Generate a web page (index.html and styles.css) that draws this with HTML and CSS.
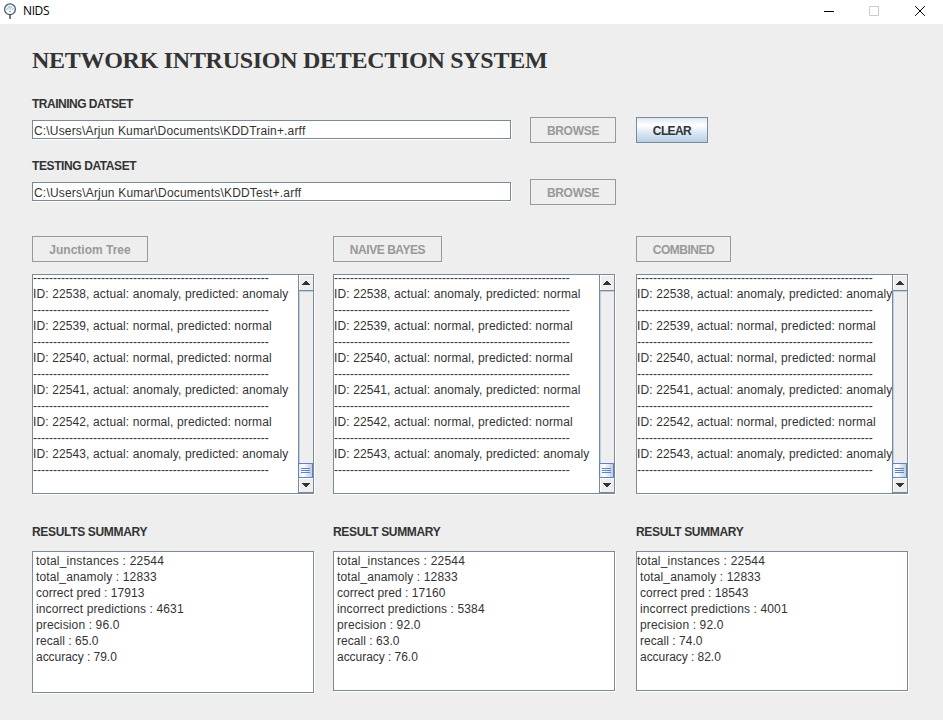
FILE: index.html
```
<!DOCTYPE html>
<html lang="en">
<head>
<meta charset="utf-8">
<title>NIDS</title>
<link rel="stylesheet" href="styles.css">
</head>
<body>
<header class="titlebar">
  <svg class="app-icon" width="14" height="18" viewBox="0 0 14 18"><circle cx="7" cy="6.300" r="5.400" fill="#f6fafc" stroke="#4b5461" stroke-width="1.200"/><path d="M3.500 6h2M6.500 6h1.500M9 6h1.500M5 4h4M6 8.500h2" stroke="#7fb0c4" stroke-width="1.200"/><path d="M7 12v4" stroke="#49525f" stroke-width="1.500"/></svg>
  <span class="app-name">NIDS</span>
  <svg class="controls" width="104" height="12" viewBox="0 0 104 12"><path d="M0 5.500h10" stroke="#000"/><path d="M45.500 .500h9v9h-9z" fill="none" stroke="#ccc"/><path d="M91.200 .200l9.600 9.600M100.800 .200L91.200 9.800" stroke="#000"/></svg>
</header>
<main class="content">
  <h1 class="title">NETWORK INTRUSION DETECTION SYSTEM</h1>
  <section class="file">
    <label class="label l-train">TRAINING DATSET</label>
    <div class="file-row">
      <div class="field"><span class="path-train">C:\Users\Arjun Kumar\Documents\KDDTrain+.arff</span></div>
      <button class="btn browse" disabled>BROWSE</button>
      <button class="btn clear">CLEAR</button>
    </div>
  </section>
  <section class="file">
    <label class="label l-test">TESTING DATASET</label>
    <div class="file-row">
      <div class="field"><span class="path-test">C:\Users\Arjun Kumar\Documents\KDDTest+.arff</span></div>
      <button class="btn browse" disabled>BROWSE</button>
    </div>
  </section>
  <div class="columns" id="columns"></div>
</main>
<script src="app.js"></script>
</body>
</html>
```
FILE: app.js
```
const ids = [22538, 22539, 22540, 22541, 22542, 22543];
const actual = ['anomaly', 'normal', 'normal', 'anomaly', 'normal', 'anomaly'];
const models = [
  { key: 'tree', name: 'Junctiom Tree', heading: 'RESULTS SUMMARY',
    predicted: ['anomaly', 'normal', 'normal', 'anomaly', 'normal', 'anomaly'],
    stats: [17913, 4631, '96.0', '65.0', '79.0'] },
  { key: 'bayes', name: 'NAIVE BAYES', heading: 'RESULT SUMMARY',
    predicted: ['normal', 'normal', 'normal', 'normal', 'normal', 'anomaly'],
    stats: [17160, 5384, '92.0', '63.0', '76.0'] },
  { key: 'combined', name: 'COMBINED', heading: 'RESULT SUMMARY',
    predicted: ['anomaly', 'normal', 'normal', 'anomaly', 'normal', 'anomaly'],
    stats: [18543, 4001, '92.0', '74.0', '82.0'] }
];
const rule = '<div class="rule">' + '-'.repeat(59) + '</div>';
const names = ['correct pred', 'incorrect predictions', 'precision', 'recall', 'accuracy'];

document.getElementById('columns').innerHTML = models.map(m => `
  <section class="column ${m.key}">
    <button class="btn model" disabled>${m.name}</button>
    <div class="pane log">
      <div class="lines">${rule}${ids.map((id, i) =>
        `<div class="line">ID: ${id}, actual: ${actual[i]}, predicted: ${m.predicted[i]}</div>${rule}`).join('')}</div>
      <div class="scrollbar">
        <div class="arrow up"><svg width="8" height="4" viewBox="0 0 8 4" shape-rendering="crispEdges"><path d="M3 0h2v1h1v1h1v1h1v1H0V3h1V2h1V1h1z" fill="#333"/></svg></div>
        <div class="track"></div>
        <div class="thumb"><i></i><i></i><i></i></div>
        <div class="arrow down"><svg width="8" height="4" viewBox="0 0 8 4" shape-rendering="crispEdges"><path d="M3 4h2V3h1V2h1V1h1V0H0v1h1v1h1v1h1z" fill="#333"/></svg></div>
      </div>
    </div>
    <h2 class="label heading">${m.heading}</h2>
    <div class="pane summary">
      <div class="stat first">total_instances : 22544</div>
      <div class="stat">total_anamoly : 12833</div>
      ${names.map((n, i) => `<div class="stat ${n.split(' ')[0]}">${n} : ${m.stats[i]}</div>`).join('')}
    </div>
  </section>`).join('');
```
FILE: styles.css
```
* { box-sizing: border-box; }
body {
  margin: 0;
  width: 943px;
  height: 720px;
  overflow: hidden;
  background: #eee;
  color: #333;
  font: 12px/16px "Liberation Sans", Arial, sans-serif;
}
.titlebar {
  height: 24px;
  background: #fff;
  display: flex;
  align-items: center;
  padding: 0 15px 0 3px;
}
.app-name {
  margin: -2px auto 0 6px;
  color: #000;
  font: 12px/16px "Open Sans", "Noto Sans", sans-serif;
  letter-spacing: -0.4px;
}
.content { padding: 22px 0 0 32px; }
.title {
  margin: 0 0 22px;
  font: bold 24px/28px "Liberation Serif", "Times New Roman", serif;
  letter-spacing: -0.28px;
  white-space: nowrap;
}
.label {
  display: block;
  margin: 0;
  font-size: 12px;
  font-weight: bold;
  line-height: 16px;
  letter-spacing: -0.33px;
}
.l-train { letter-spacing: -0.5px; }
.l-test { letter-spacing: -0.4px; }
.file { height: 62px; }
.file-row { display: flex; align-items: flex-start; height: 26px; margin-top: 5px; }
.field {
  width: 479px;
  height: 19px;
  margin: 3px 19px 0 0;
  padding: 2px 0 0 1px;
  border: 1px solid #7a8a99;
  box-shadow: 1px 1px #fff;
  background: #fff;
  white-space: nowrap;
  letter-spacing: 0.17px;
}
.path-test { letter-spacing: 0.19px; }
.btn {
  height: 26px;
  padding: 1px 0 0;
  border: 1px solid #999;
  border-radius: 0;
  background: #eee;
  color: #999;
  font: bold 12px/16px "Liberation Sans", Arial, sans-serif;
}
.browse { width: 86px; margin-right: 20px; letter-spacing: -0.3px; }
.clear {
  width: 72px;
  border-color: #7a8a99;
  color: #333;
  letter-spacing: -0.6px;
  background: linear-gradient(#dde8f3, #fff 30%, #dde8f3 60%, #b8cfe5);
}
.columns {
  display: grid;
  grid-template-columns: 282px 282px 272px;
  column-gap: 19px;
  padding-top: 16px;
}
.combined { margin-left: 2px; width: 272px; }
.model { display: block; }
.tree .model { width: 116px; }
.bayes .model { width: 109px; letter-spacing: -0.45px; }
.combined .model { width: 95px; letter-spacing: -0.5px; }
.pane { border: 1px solid #7a8a99; box-shadow: 1px 1px #fff; background: #fff; }
.log { display: flex; height: 220px; margin-top: 12px; }
.lines { flex: 1; min-width: 0; overflow: hidden; white-space: nowrap; }
.lines > :first-child { margin-top: -5px; }
.line, .rule { height: 16px; }
.line { letter-spacing: 0.12px; }
.scrollbar {
  width: 15px;
  border-left: 1px solid #7a8a99;
  display: flex;
  flex-direction: column;
  background: #eee;
}
.arrow { height: 16px; display: flex; align-items: center; justify-content: center; box-shadow: inset 1px 1px #fff; }
.up { border-bottom: 1px solid #7a8a99; }
.down { border-bottom: 1px solid #7a8a99; height: 15px; }
.track { flex: 1; box-shadow: inset 1px 1px #b8cfe5; }
.thumb {
  height: 15px;
  margin-left: -1px;
  border: 1px solid #6382bf;
  background: linear-gradient(90deg, #dde8f3, #fff 30%, #b8cfe5);
  display: flex;
  flex-direction: column;
  align-items: center;
  justify-content: center;
  gap: 1px;
}
.thumb i { width: 9px; height: 1px; background: #6382bf; }
.heading { margin: 30px 0 11px; }
.summary { height: 140px; padding-top: 1px; }
.tree .summary { height: 142px; }
.stat { padding-left: 3px; height: 16px; letter-spacing: 0.13px; }
.first { letter-spacing: 0.2px; }
.correct { letter-spacing: 0.05px; }
.recall { letter-spacing: 0.04px; }
.accuracy { letter-spacing: -0.04px; }
.combined .first { padding-left: 0; }
```
